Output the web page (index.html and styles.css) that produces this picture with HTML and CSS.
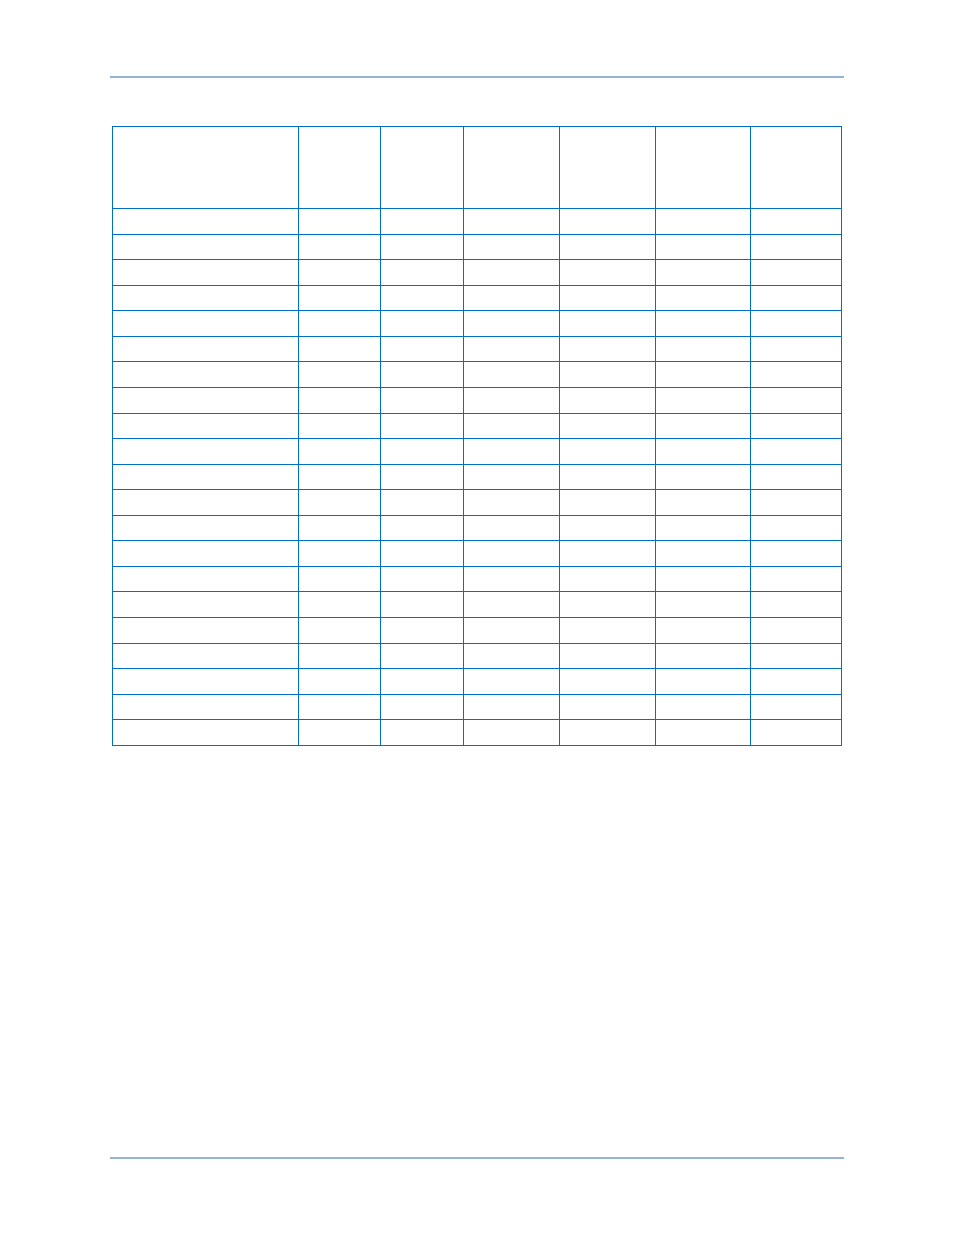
FILE: index.html
```html
<!DOCTYPE html>
<html lang="en">
<head>
<meta charset="utf-8">
<title>Table</title>
<link rel="stylesheet" href="styles.css">
</head>
<body>
<div class="page">
  <div class="rule rule-top"></div>
  <div class="grid">
    <div class="c"></div><div class="c"></div><div class="c"></div><div class="c"></div><div class="c"></div><div class="c"></div><div class="c"></div>
    <div class="c"></div><div class="c"></div><div class="c"></div><div class="c"></div><div class="c"></div><div class="c"></div><div class="c"></div>
    <div class="c"></div><div class="c"></div><div class="c"></div><div class="c"></div><div class="c"></div><div class="c"></div><div class="c"></div>
    <div class="c"></div><div class="c"></div><div class="c"></div><div class="c"></div><div class="c"></div><div class="c"></div><div class="c"></div>
    <div class="c"></div><div class="c"></div><div class="c"></div><div class="c"></div><div class="c"></div><div class="c"></div><div class="c"></div>
    <div class="c"></div><div class="c"></div><div class="c"></div><div class="c"></div><div class="c"></div><div class="c"></div><div class="c"></div>
    <div class="c"></div><div class="c"></div><div class="c"></div><div class="c"></div><div class="c"></div><div class="c"></div><div class="c"></div>
    <div class="c"></div><div class="c"></div><div class="c"></div><div class="c"></div><div class="c"></div><div class="c"></div><div class="c"></div>
    <div class="c"></div><div class="c"></div><div class="c"></div><div class="c"></div><div class="c"></div><div class="c"></div><div class="c"></div>
    <div class="c"></div><div class="c"></div><div class="c"></div><div class="c"></div><div class="c"></div><div class="c"></div><div class="c"></div>
    <div class="c"></div><div class="c"></div><div class="c"></div><div class="c"></div><div class="c"></div><div class="c"></div><div class="c"></div>
    <div class="c"></div><div class="c"></div><div class="c"></div><div class="c"></div><div class="c"></div><div class="c"></div><div class="c"></div>
    <div class="c"></div><div class="c"></div><div class="c"></div><div class="c"></div><div class="c"></div><div class="c"></div><div class="c"></div>
    <div class="c"></div><div class="c"></div><div class="c"></div><div class="c"></div><div class="c"></div><div class="c"></div><div class="c"></div>
    <div class="c"></div><div class="c"></div><div class="c"></div><div class="c"></div><div class="c"></div><div class="c"></div><div class="c"></div>
    <div class="c"></div><div class="c"></div><div class="c"></div><div class="c"></div><div class="c"></div><div class="c"></div><div class="c"></div>
    <div class="c"></div><div class="c"></div><div class="c"></div><div class="c"></div><div class="c"></div><div class="c"></div><div class="c"></div>
    <div class="c"></div><div class="c"></div><div class="c"></div><div class="c"></div><div class="c"></div><div class="c"></div><div class="c"></div>
    <div class="c"></div><div class="c"></div><div class="c"></div><div class="c"></div><div class="c"></div><div class="c"></div><div class="c"></div>
    <div class="c"></div><div class="c"></div><div class="c"></div><div class="c"></div><div class="c"></div><div class="c"></div><div class="c"></div>
    <div class="c"></div><div class="c"></div><div class="c"></div><div class="c"></div><div class="c"></div><div class="c"></div><div class="c"></div>
    <div class="c"></div><div class="c"></div><div class="c"></div><div class="c"></div><div class="c"></div><div class="c"></div><div class="c"></div>
  </div>
  <div class="rule rule-bottom"></div>
</div>
</body>
</html>
```

FILE: styles.css
```css
html, body {
  margin: 0;
  padding: 0;
  background: #ffffff;
  font-family: "Liberation Sans", Arial, sans-serif;
}

.page {
  display: flex;
  flex-direction: column;
  height: 1235px;
  box-sizing: border-box;
  padding-top: 76px;
}

.rule {
  height: 2px;
  width: 734px;
  margin-left: 110px;
  background: #95b3d7;
  flex: none;
}

.rule-bottom {
  margin-top: auto;
  margin-bottom: 76px;
}

.grid {
  flex: none;
  margin-top: 48px;
  margin-left: 112px;
  align-self: flex-start;
  display: grid;
  grid-template-columns: 185px 81px 82px 95px 95px 94px 90px;
  grid-template-rows: 81px repeat(21, 24.571px);
  gap: 1px;
  padding: 1px;
  background: #0070c0;
}

.c {
  background: #ffffff;
}
```
